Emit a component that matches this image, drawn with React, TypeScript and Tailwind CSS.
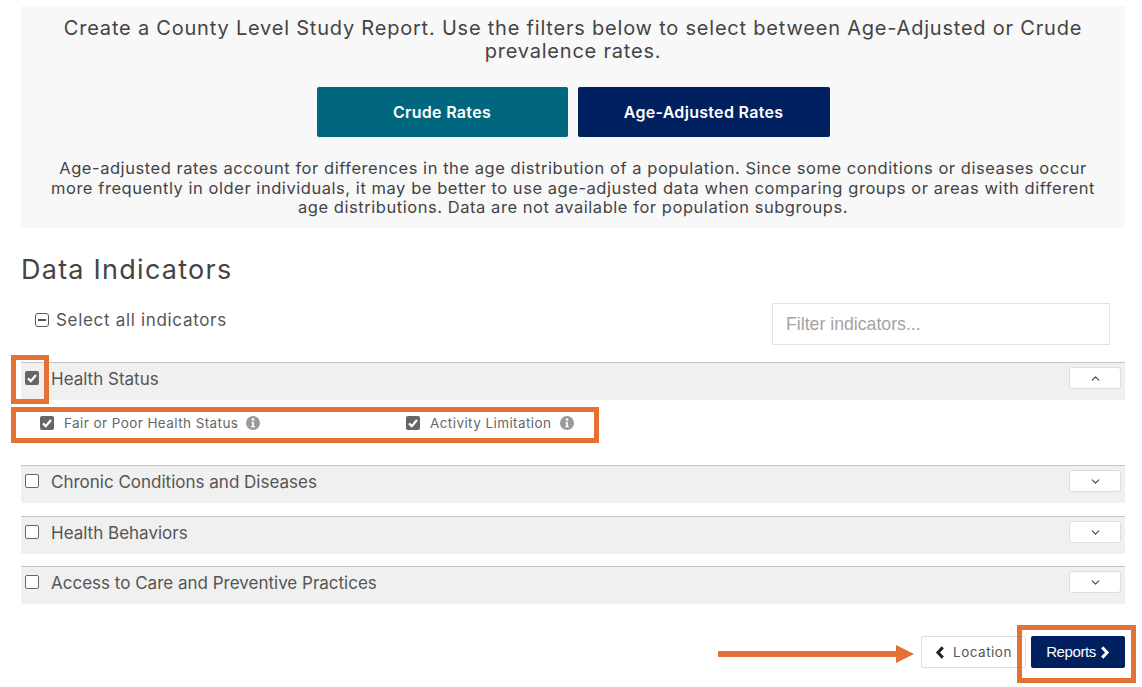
import { ChevronDown, ChevronUp } from "lucide-react"

const font = "font-['Inter','Noto_Sans',sans-serif]"

const CheckedBox = ({ size = "w-[14px] h-[14px]" }: { size?: string }) => (
  <span className={`${size} shrink-0 rounded-[2px] bg-[#666666] flex items-center justify-center`}>
    <svg viewBox="0 0 14 14" className="w-full h-full">
      <path d="M3 7.4 L5.8 10.2 L11 4" fill="none" stroke="#fff" strokeWidth="2.2" />
    </svg>
  </span>
)

const InfoIcon = () => (
  <svg viewBox="0 0 14 14" className="w-[14px] h-[14px] shrink-0">
    <circle cx="7" cy="7" r="7" fill="#9a9a9a" />
    <circle cx="7" cy="3.6" r="1.3" fill="#fff" />
    <path d="M5.4 6h2.5v4.1h1v1.2H5.2v-1.2h1V7.2h-.8z" fill="#fff" />
  </svg>
)

const ToggleButton = ({ open }: { open?: boolean }) => (
  <div className="w-[52px] h-[22px] bg-white border border-[#dddddd] rounded-[3px] flex items-center justify-center text-[#444444]">
    {open ? <ChevronUp size={13} /> : <ChevronDown size={13} />}
  </div>
)

const SectionRow = ({ label, checked, open }: { label: string; checked?: boolean; open?: boolean }) => (
  <div className="h-[38px] bg-[#f0f0f0] border-t border-[#c4c4c4] flex items-start pl-[4px] pr-[4px]">
    <div className="w-[26px] mt-[8px] flex">
      {checked ? (
        <CheckedBox />
      ) : (
        <span className="w-[14px] h-[14px] rounded-[2px] border border-[#666666] bg-white" />
      )}
    </div>
    <span className="mt-[5px] text-[17px] leading-[22px] text-[#555555]">{label}</span>
    <div className="ml-auto mt-[4px]">
      <ToggleButton open={open} />
    </div>
  </div>
)

const App = () => {
  return (
    <div className={`relative w-[1142px] h-[687px] overflow-hidden bg-white pl-[21px] pr-[17px] pt-[6px] ${font}`}>
      <div className="h-[222px] bg-[#f8f8f8] px-[20px] text-center">
        <p className="pt-[11px] text-[20px] leading-[23px] tracking-[0.79px] text-[#444444]">
          Create a County Level Study Report. Use the filters below to select between Age-Adjusted or Crude prevalence rates.
        </p>
        <div className="mt-[24px] flex justify-center gap-[10px]">
          <button className="w-[251px] h-[50px] rounded-[2px] bg-[#00677f] text-white text-[16px] tracking-[0.3px] font-semibold">
            Crude Rates
          </button>
          <button className="w-[252px] h-[50px] rounded-[2px] bg-[#00205f] text-white text-[16px] tracking-[0.3px] font-semibold">
            Age-Adjusted Rates
          </button>
        </div>
        <p className="mt-[22px] -mx-[4px] text-[16.5px] leading-[19.5px] tracking-[0.55px] text-[#444444]">
          Age-adjusted rates account for differences in the age distribution of a population. Since some conditions or diseases occur more frequently in older individuals, it may be better to use age-adjusted data when comparing groups or areas with different age distributions. Data are not available for population subgroups.
        </p>
      </div>

      <h2 className="mt-[25px] text-[27px] leading-[34px] tracking-[1.25px] text-[#444444]">Data Indicators</h2>

      <div className="mt-[16px] h-[42px] flex items-start pr-[15px]">
        <div className="pl-[14px] pt-[6px] flex items-center gap-[7px]">
          <span className="w-[14px] h-[14px] rounded-[3px] border border-[#555555] flex items-center justify-center">
            <span className="w-[8px] h-[2px] bg-[#555555]" />
          </span>
          <span className="text-[17px] leading-[22px] tracking-[0.68px] text-[#555555]">Select all indicators</span>
        </div>
        <div className="ml-auto w-[338px] h-[42px] bg-white border border-[#e3e3e3] flex items-center pl-[13px] font-['Liberation_Sans',sans-serif] text-[17.7px] text-[#a3a3a3]">
          Filter indicators...
        </div>
      </div>

      <div className="mt-[17px]">
        <SectionRow label="Health Status" checked open />
        <div className="h-[65px] flex pl-[19px] pt-[16px] text-[13.5px] tracking-[0.42px] text-[#666666]">
          <div className="w-[366px] flex items-start gap-[10px]">
            <CheckedBox />
            <span className="leading-[16px] -mt-[1px]">Fair or Poor Health Status</span>
            <span className="-ml-[2px]"><InfoIcon /></span>
          </div>
          <div className="flex items-start gap-[10px]">
            <CheckedBox />
            <span className="leading-[16px] -mt-[1px]">Activity Limitation</span>
            <span className="-ml-[1px]"><InfoIcon /></span>
          </div>
        </div>
        <SectionRow label="Chronic Conditions and Diseases" />
        <div className="mt-[13px]"><SectionRow label="Health Behaviors" /></div>
        <div className="mt-[12px]"><SectionRow label="Access to Care and Preventive Practices" /></div>
      </div>

      <div className="mt-[32px] flex justify-end gap-[5px]">
        <button className="w-[105px] h-[32px] bg-white border border-[#dddddd] rounded-[2px] flex items-center justify-center gap-[8px] text-[13.5px] tracking-[0.5px] text-[#555555]">
          <svg viewBox="0 0 10 14" className="w-[10px] h-[13px]">
            <path d="M8 1.5 L2.8 7 L8 12.5" fill="none" stroke="#222" strokeWidth="3.2" />
          </svg>
          Location
        </button>
        <button className="w-[94px] h-[32px] bg-[#00205f] rounded-[2px] flex items-center justify-center gap-[4px] font-['Liberation_Sans',sans-serif] text-[15px] tracking-[-0.4px] text-white">
          Reports
          <svg viewBox="0 0 10 14" className="w-[10px] h-[13px]">
            <path d="M2 1.5 L7.2 7 L2 12.5" fill="none" stroke="#fff" strokeWidth="3.2" />
          </svg>
        </button>
      </div>

      {/* orange callouts drawn on top of the screenshot */}
      <div className="absolute left-[11px] top-[355px] w-[38px] h-[49px] border-[5px] border-[#e27133]" />
      <div className="absolute left-[11px] top-[407px] w-[588px] h-[36px] border-[5px] border-[#e27133]" />
      <div className="absolute left-[1017px] top-[625px] w-[119px] h-[58px] border-[5px] border-[#e27133]" />
      <svg viewBox="0 0 196 18" className="absolute left-[718px] top-[645px] w-[196px] h-[18px]">
        <path d="M0 6h178V0l18 9-18 9v-6H0z" fill="#e27133" />
      </svg>
    </div>
  )
}

export default App
